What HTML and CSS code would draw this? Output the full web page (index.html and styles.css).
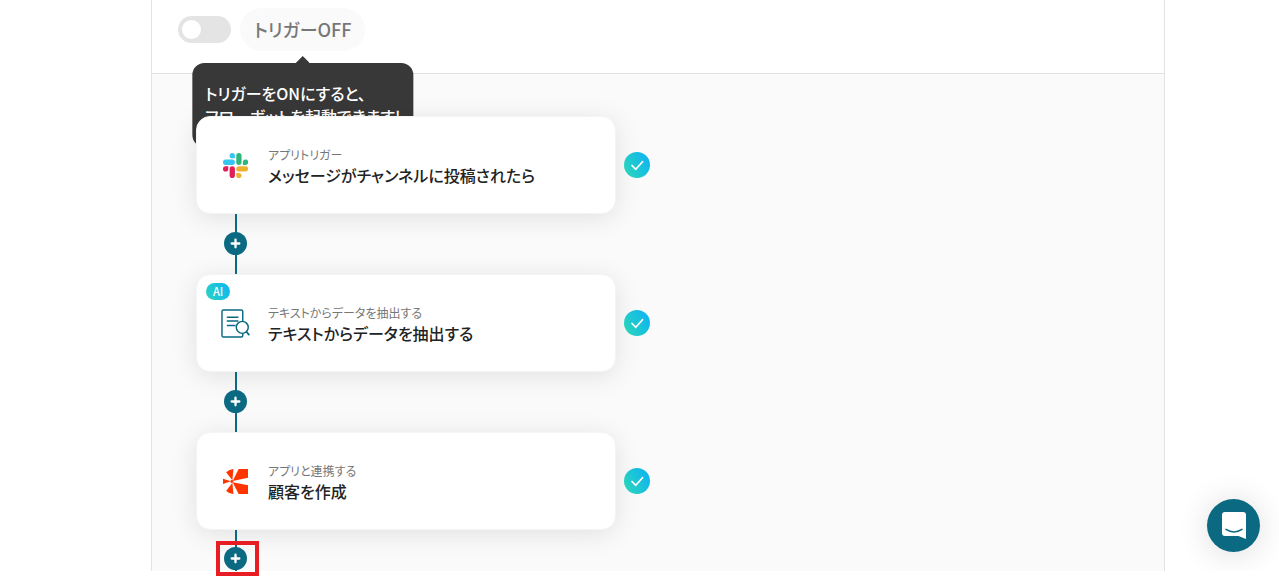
FILE: index.html
```html
<!DOCTYPE html>
<html lang="ja">
  <head>
    <meta charset="UTF-8" />
    <meta name="viewport" content="width=device-width, initial-scale=1.0" />
    <title>フローボット</title>
    <link rel="stylesheet" href="styles.css">
  </head>
  <body>
    <svg class="defs" width="0" height="0" aria-hidden="true">
      <symbol id="icon-plus" viewBox="0 0 24 24">
        <path d="M12 8v8M8 12h8" fill="none" stroke="#fff" stroke-width="2.4" stroke-linecap="round" />
      </symbol>
      <symbol id="icon-check" viewBox="0 0 26 26">
        <path d="M8 13.5l3.8 3.8 6.7-7.6" fill="none" stroke="#fff" stroke-width="1.7" stroke-linecap="round" stroke-linejoin="round" />
      </symbol>
    </svg>

    <main class="panel">
      <header class="trigger-bar">
        <input type="checkbox" class="switch" id="trigger" />
        <div class="trigger-status">
          <label class="trigger-label" for="trigger">トリガーOFF</label>
          <div class="tooltip">トリガーをONにすると、<br />フローボットを起動できます!</div>
        </div>
      </header>

      <section class="flow">
        <div class="step">
          <article class="card">
            <svg class="card-icon" viewBox="0 0 122 122" aria-hidden="true">
              <g fill="#e01e5a">
                <path d="M25.8 77.6a12.9 12.9 0 1 1-12.9-12.9h12.9z" />
                <path d="M32.3 77.6a12.9 12.9 0 0 1 25.8 0v32.3a12.9 12.9 0 0 1-25.8 0z" />
              </g>
              <g fill="#36c5f0">
                <path d="M45.2 25.8a12.9 12.9 0 1 1 12.9-12.9v12.9z" />
                <path d="M45.2 32.3a12.9 12.9 0 0 1 0 25.8H12.9a12.9 12.9 0 0 1 0-25.8z" />
              </g>
              <g fill="#2eb67d">
                <path d="M97 45.2a12.9 12.9 0 1 1 12.9 12.9H97z" />
                <path d="M90.5 45.2a12.9 12.9 0 0 1-25.8 0V12.9a12.9 12.9 0 0 1 25.8 0z" />
              </g>
              <g fill="#ecb22e">
                <path d="M77.6 97a12.9 12.9 0 1 1-12.9 12.9V97z" />
                <path d="M77.6 90.5a12.9 12.9 0 0 1 0-25.8h32.3a12.9 12.9 0 0 1 0 25.8z" />
              </g>
            </svg>
            <div class="card-text">
              <p class="card-kind">アプリトリガー</p>
              <h2 class="card-title">メッセージがチャンネルに投稿されたら</h2>
            </div>
          </article>
          <svg class="done" role="img" aria-label="完了"><use href="#icon-check" /></svg>
        </div>
        <div class="connector">
          <button type="button" class="add" aria-label="追加"><svg><use href="#icon-plus" /></svg></button>
        </div>

        <div class="step">
          <article class="card">
            <span class="ai-badge">AI</span>
            <svg class="card-icon card-icon-large" viewBox="0 0 30 30" fill="none" stroke="#0b6a82" stroke-width="1.5" aria-hidden="true">
              <path d="M22.5 13V2.5A1.5 1.5 0 0 0 21 1H2.5A1.5 1.5 0 0 0 1 2.5v25A1.5 1.5 0 0 0 2.5 29H21a1.5 1.5 0 0 0 1.5-1.5V25" />
              <path d="M6 8.5h12M6 12.5h12M6 17h9" />
              <circle cx="22" cy="19" r="6.2" />
              <path d="M26.3 23.5l3 3.5" stroke-width="1.8" />
            </svg>
            <div class="card-text">
              <p class="card-kind">テキストからデータを抽出する</p>
              <h2 class="card-title">テキストからデータを抽出する</h2>
            </div>
          </article>
          <svg class="done" role="img" aria-label="完了"><use href="#icon-check" /></svg>
        </div>
        <div class="connector">
          <button type="button" class="add" aria-label="追加"><svg><use href="#icon-plus" /></svg></button>
        </div>

        <div class="step">
          <article class="card">
            <svg class="card-icon" viewBox="0 0 24 24" fill="#ff3500" aria-hidden="true">
              <path d="M15 0H24v8.3L9.3 11.4z" />
              <path d="M9.3 12.6L24 15.7V24H15z" />
              <path d="M3 3Q6 .3 10 0L9 10.8z" />
              <path d="M3 21L9 13.2 10 24Q6 23.7 3 21z" />
              <path d="M0 9.3l7.5 2.5L0 14.3z" />
              <circle cx="8.5" cy="12" r="1.4" />
            </svg>
            <div class="card-text">
              <p class="card-kind">アプリと連携する</p>
              <h2 class="card-title">顧客を作成</h2>
            </div>
          </article>
          <svg class="done" role="img" aria-label="完了"><use href="#icon-check" /></svg>
        </div>
        <div class="connector connector-last">
          <button type="button" class="add add-marked" aria-label="追加"><svg><use href="#icon-plus" /></svg></button>
        </div>
      </section>
    </main>

    <div class="chat-area">
      <button type="button" class="chat" aria-label="チャットを開く">
        <svg viewBox="0 0 24 28" aria-hidden="true">
          <path d="M3 0h18a3 3 0 0 1 3 3v24l-7.5-3H3a3 3 0 0 1-3-3V3a3 3 0 0 1 3-3z" fill="#fff" />
          <path d="M4 17.3q8 5.2 16 0" fill="none" stroke="#0b6a82" stroke-width="1.5" stroke-linecap="round" />
        </svg>
      </button>
    </div>
  </body>
</html>
```
FILE: styles.css
```css
* {
  margin: 0;
  padding: 0;
  box-sizing: border-box;
}

body {
  font-family: "Noto Sans CJK JP", "Noto Sans", sans-serif;
  font-feature-settings: "palt";
  background-color: #ffffff;
  color: #222;
  display: flex;
  min-height: 100vh;
  padding: 0 114px 6px 151px;
}

.defs {
  position: absolute;
}

.panel {
  flex: 1;
  display: flex;
  flex-direction: column;
  border-left: 1px solid #e3e3e3;
  border-right: 1px solid #e3e3e3;
}

/* Trigger bar */
.trigger-bar {
  display: flex;
  align-items: center;
  gap: 9px;
  padding: 8px 26px 22px;
  border-bottom: 1px solid #e3e3e3;
}

.switch {
  appearance: none;
  width: 53px;
  height: 27px;
  padding: 4px;
  border-radius: 14px;
  background-color: #e4e4e4;
  cursor: pointer;
}

.switch::before {
  content: "";
  display: block;
  width: 19px;
  height: 19px;
  border-radius: 50%;
  background-color: #fff;
}

.switch:checked {
  background-color: #0b6a82;
}

.switch:checked::before {
  margin-left: auto;
}

.trigger-status {
  position: relative;
}

.trigger-label {
  display: block;
  padding: 0 14px;
  border-radius: 22px;
  background-color: #fafafa;
  color: #777;
  font-size: 18px;
  font-weight: 500;
  line-height: 43px;
}

.tooltip {
  position: absolute;
  top: 55px;
  left: 50%;
  transform: translateX(-50%);
  z-index: 1;
  padding: 19px 13px;
  border-radius: 12px;
  background-color: #383838;
  color: #fff;
  font-size: 16px;
  font-weight: 500;
  line-height: 23px;
  white-space: nowrap;
}

.tooltip::before {
  content: "";
  position: absolute;
  top: -7px;
  left: 50%;
  width: 14px;
  height: 7px;
  margin-left: -7px;
  background-color: #383838;
  clip-path: polygon(50% 0, 100% 100%, 0 100%);
}

/* Flow */
.flow {
  flex: 1;
  padding: 42px 44px 0;
  background-color: #fafafa;
}

.step {
  display: flex;
  align-items: center;
  gap: 8px;
}

.card {
  position: relative;
  z-index: 2;
  display: flex;
  align-items: center;
  gap: 18px;
  width: 420px;
  height: 98px;
  padding: 0 24px;
  border: 1px solid #f4f4f4;
  border-radius: 14px;
  background-color: #fff;
  box-shadow: 0 4px 26px rgba(0, 0, 0, 0.1);
}

.card-icon {
  width: 25px;
  height: 25px;
  margin: 0 2px;
}

.card-icon-large {
  width: 29px;
  height: 29px;
  margin: 0;
}

.card-kind {
  color: #777;
  font-size: 12px;
  line-height: 20px;
}

.card-title {
  font-size: 16px;
  font-weight: 500;
  line-height: 21px;
}

.ai-badge {
  position: absolute;
  top: 8px;
  left: 9px;
  padding: 0 7px;
  border-radius: 9px;
  background: linear-gradient(60deg, #2dd4bf, #0bb5f5);
  color: #fff;
  font-size: 11px;
  font-weight: 500;
  line-height: 17px;
}

.done {
  position: relative;
  z-index: 2;
  width: 26px;
  height: 26px;
  border-radius: 50%;
  background: linear-gradient(60deg, #2dd9b5, #0bb0f8);
}

.connector {
  position: relative;
  z-index: 3;
  display: flex;
  justify-content: center;
  align-items: center;
  width: 79px;
  height: 60px;
  padding-bottom: 2px;
  background: linear-gradient(#0b6a82, #0b6a82) center / 2px 100% no-repeat;
}

.connector-last {
  height: 41px;
  padding: 16px 0 0;
}

.add {
  position: relative;
  display: flex;
  width: 23px;
  height: 23px;
  border: none;
  border-radius: 50%;
  background-color: #0b6a82;
  cursor: pointer;
}

.add svg {
  width: 23px;
  height: 23px;
}

/* Red frame around the step to add next */
.add-marked::after {
  content: "";
  position: absolute;
  inset: -6px -12px -6px -8px;
  border: 4px solid #e81c23;
}

/* Chat launcher */
.chat-area {
  position: fixed;
  right: 0;
  bottom: 6px;
  display: flex;
  justify-content: flex-end;
  align-items: flex-end;
  width: 114px;
  height: 130px;
  padding: 0 19px 19px 0;
  overflow: hidden;
}

.chat {
  display: flex;
  justify-content: center;
  align-items: center;
  width: 53px;
  height: 53px;
  border: none;
  border-radius: 50%;
  background-color: #0b6a82;
  box-shadow: 0 2px 32px rgba(0, 0, 0, 0.14);
  cursor: pointer;
}

.chat svg {
  width: 24px;
  height: 28px;
}
```
